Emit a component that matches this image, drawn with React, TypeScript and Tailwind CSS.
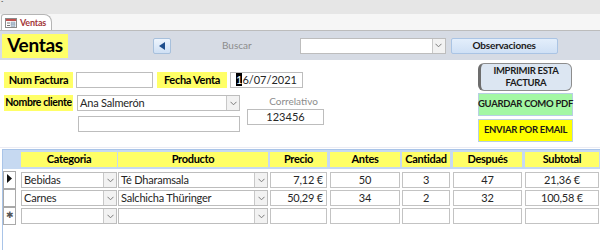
import React from 'react';

const Chevron = () => (
  <svg width="7" height="5" viewBox="0 0 7 5">
    <path d="M0.5 0.8 L3.5 3.8 L6.5 0.8" fill="none" stroke="#7a7a7a" strokeWidth="1" />
  </svg>
);

const Combo = ({ w, text }: { w: string; text?: string }) => (
  <div className={`${w} h-[16px] flex border border-[#bdbdbd] bg-white`}>
    <div className="flex-1 px-[2px] text-[11px] leading-[14px] tracking-[-0.2px] text-[#262626] truncate">{text}</div>
    <div className="w-[13px] border-l border-[#c8c8c8] bg-[#f2f2f2] flex items-center justify-center">
      <Chevron />
    </div>
  </div>
);

const Label = ({ w, children }: { w: string; children: React.ReactNode }) => (
  <div
    className={`${w} h-[16px] bg-[#ffff66] flex items-center justify-center whitespace-nowrap text-[11px] tracking-[-0.3px] font-bold text-black`}
  >
    {children}
  </div>
);

const Cell = ({ w, children, align = 'center' }: { w: string; children?: React.ReactNode; align?: string }) => (
  <div
    className={`${w} h-[16px] border border-[#c3c3c3] bg-white text-[11px] leading-[14px] tracking-[-0.2px] text-[#262626] px-[3px] ${
      align === 'right' ? 'text-right' : 'text-center'
    }`}
  >
    {children}
  </div>
);

const HeadCell = ({ w, children }: { w: string; children: React.ReactNode }) => (
  <div
    className={`${w} h-[15px] bg-[#ffff66] flex items-center justify-center whitespace-nowrap text-[11px] tracking-[-0.3px] font-bold text-black`}
  >
    {children}
  </div>
);

const rows = [
  { cat: 'Bebidas', prod: 'Té Dharamsala', precio: '7,12 €', antes: '50', cant: '3', desp: '47', sub: '21,36 €', sel: 'current' },
  { cat: 'Carnes', prod: 'Salchicha Thüringer', precio: '50,29 €', antes: '34', cant: '2', desp: '32', sub: '100,58 €', sel: '' },
  { cat: '', prod: '', precio: '', antes: '', cant: '', desp: '', sub: '', sel: 'new' },
];

const Selector = ({ kind }: { kind: string }) => (
  <div className="w-[13px] h-[18px] border border-[#a9a9a9] bg-white flex items-start justify-center pt-[2px]">
    {kind === 'current' && (
      <svg width="5" height="9" viewBox="0 0 5 9">
        <path d="M0 0 L5 4.5 L0 9 Z" fill="#111" />
      </svg>
    )}
    {kind === 'new' && <span className="text-[9px] leading-none text-[#555]">✱</span>}
  </div>
);

export default function App() {
  return (
    <div className="w-[600px] h-[250px] overflow-hidden bg-white font-['Lato','Liberation_Sans',sans-serif] flex flex-col">
      {/* top strip */}
      <div className="h-[14px] bg-[#e6e6e6] pl-[1px] text-[7px] leading-[7px] text-[#555]">⁼</div>

      {/* tab strip */}
      <div className="h-[17px] bg-[#f6f6f6] border-b border-[#bcbcbc] flex items-end pl-[1px]">
        <div className="h-[16px] w-[51px] bg-white border border-b-0 border-[#b5b5b5] rounded-tl-[3px] rounded-tr-[8px] flex items-center gap-[3px] pl-[3px]">
          <svg width="12" height="10" viewBox="0 0 12 10">
            <rect x="0.5" y="0.5" width="11" height="9" fill="#fff" stroke="#8a8a8a" />
            <rect x="1" y="1" width="10" height="2" fill="#c0504d" />
            <rect x="2" y="4.5" width="3" height="1" fill="#777" />
            <rect x="6" y="4" width="4" height="2" fill="#bcd" stroke="#89a" strokeWidth="0.5" />
            <rect x="2" y="7" width="3" height="1" fill="#777" />
            <rect x="6" y="6.5" width="4" height="2" fill="#bcd" stroke="#89a" strokeWidth="0.5" />
          </svg>
          <span className="text-[9px] font-bold tracking-[-0.2px] text-[#a4373a]">Ventas</span>
        </div>
      </div>

      {/* form header */}
      <div className="h-[29px] bg-[#d6dbe4] flex items-center">
        <div className="ml-[2px] w-[66px] h-[24px] bg-[#ffff66] flex items-center justify-center text-[19px] font-bold tracking-[-0.3px] text-black">
          Ventas
        </div>
        <div className="ml-[85px] w-[18px] h-[16px] rounded-[2px] border border-[#a7c0dc] bg-gradient-to-b from-[#eef5fd] to-[#cfe0f4] flex items-center justify-center">
          <svg width="6" height="8" viewBox="0 0 6 8">
            <path d="M6 0 L0 4 L6 8 Z" fill="#1f4e8c" />
          </svg>
        </div>
        <div className="ml-[51px] text-[10px] text-[#8c8c8c]">Buscar</div>
        <div className="ml-[48px]">
          <Combo w="w-[146px]" />
        </div>
        <div className="ml-[5px] w-[107px] h-[16px] rounded-[2px] border border-[#aac4e4] bg-gradient-to-b from-[#e3eefb] to-[#cfe0f5] flex items-center justify-center text-[10px] font-bold tracking-[-0.2px] text-[#1a1a1a]">
          Observaciones
        </div>
      </div>

      {/* body top */}
      <div className="h-[88px] flex border-b border-[#ececf4]">
        <div className="flex flex-col ml-[4px]">
          <div className="mt-[12px] flex items-center">
            <Label w="w-[69px]">Num Factura</Label>
            <div className="ml-[3px] w-[77px] h-[16px] border border-[#bdbdbd] bg-white" />
            <div className="ml-[4px]">
              <Label w="w-[70px]">Fecha Venta</Label>
            </div>
            <div className="ml-[3px] w-[73px] h-[16px] border border-[#bdbdbd] bg-white text-[11px] leading-[14px] text-[#262626] text-center">
              <span className="bg-black text-white">1</span>6/07/2021
            </div>
          </div>
          <div className="mt-[7px] flex items-start">
            <div className="w-[69px] h-[16px] bg-[#ffff66] flex items-center justify-center whitespace-nowrap text-[10.5px] tracking-[-0.4px] font-bold text-black">
              Nombre cliente
            </div>
            <div className="ml-[4px] flex flex-col">
              <Combo w="w-[163px]" text="Ana Salmerón" />
              <div className="mt-[5px] ml-[1px] w-[162px] h-[16px] border border-[#bdbdbd] bg-white" />
            </div>
            <div className="ml-[7px] flex flex-col items-center w-[77px]">
              <div className="mt-[-1px] ml-[16px] text-[10px] text-[#8c8c8c] leading-[14px]">Correlativo</div>
              <div className="mt-[1px] w-[77px] h-[16px] border border-[#bdbdbd] bg-white text-[11px] leading-[14px] text-center text-[#262626]">
                123456
              </div>
            </div>
          </div>
        </div>

        <div className="ml-[154px] mt-[3px] flex flex-col w-[95px]">
          <div className="w-[94px] h-[28px] rounded-[6px] border border-[#8d8d8d] border-l-[3px] border-l-[#6d6d6d] bg-[#dce6f2] flex items-center justify-center text-center text-[9.5px] leading-[12px] tracking-[-0.3px] font-bold text-[#1a1a1a]">
            IMPRIMIR ESTA
            <br />
            FACTURA
          </div>
          <div className="mt-[2px] w-[95px] h-[23px] border border-[#b7cfe3] bg-[#a3f7a3] flex items-center justify-center whitespace-nowrap text-[9.5px] tracking-[-0.3px] font-bold text-[#1a1a1a]">
            GUARDAR COMO PDF
          </div>
          <div className="mt-[3px] w-[95px] h-[23px] border border-[#b7cfe3] bg-[#ffff00] flex items-center justify-center whitespace-nowrap text-[9.5px] tracking-[-0.3px] font-bold text-[#1a1a1a]">
            ENVIAR POR EMAIL
          </div>
        </div>
      </div>

      {/* subform */}
      <div className="mt-[1px] ml-[2px] flex-1 border-l border-t border-[#a9c4e8]">
        <div className="h-[19px] bg-[#c6d9f1] flex items-center">
          <div className="w-[13px]" />
          <div className="ml-[5px] flex items-center">
            <HeadCell w="w-[96px]">Categoria</HeadCell>
            <div className="ml-[1px]"><HeadCell w="w-[150px]">Producto</HeadCell></div>
            <div className="ml-[2px]"><HeadCell w="w-[57px]">Precio</HeadCell></div>
            <div className="ml-[3px]"><HeadCell w="w-[70px]">Antes</HeadCell></div>
            <div className="ml-[2px]"><HeadCell w="w-[48px]">Cantidad</HeadCell></div>
            <div className="ml-[3px]"><HeadCell w="w-[69px]">Después</HeadCell></div>
            <div className="ml-[3px]"><HeadCell w="w-[74px]">Subtotal</HeadCell></div>
          </div>
        </div>
        <div className="mt-[2px] flex flex-col">
          {rows.map((r, i) => (
            <div key={i} className="h-[18px] flex items-center">
              <Selector kind={r.sel} />
              <div className="ml-[5px] flex items-center">
                <Combo w="w-[96px]" text={r.cat} />
                <div className="ml-[1px]"><Combo w="w-[150px]" text={r.prod} /></div>
                <div className="ml-[2px]"><Cell w="w-[57px]" align="right">{r.precio}</Cell></div>
                <div className="ml-[3px]"><Cell w="w-[70px]">{r.antes}</Cell></div>
                <div className="ml-[2px]"><Cell w="w-[48px]">{r.cant}</Cell></div>
                <div className="ml-[3px]"><Cell w="w-[69px]">{r.desp}</Cell></div>
                <div className="ml-[3px]"><Cell w="w-[74px]">{r.sub}</Cell></div>
              </div>
            </div>
          ))}
        </div>
      </div>
    </div>
  );
}
